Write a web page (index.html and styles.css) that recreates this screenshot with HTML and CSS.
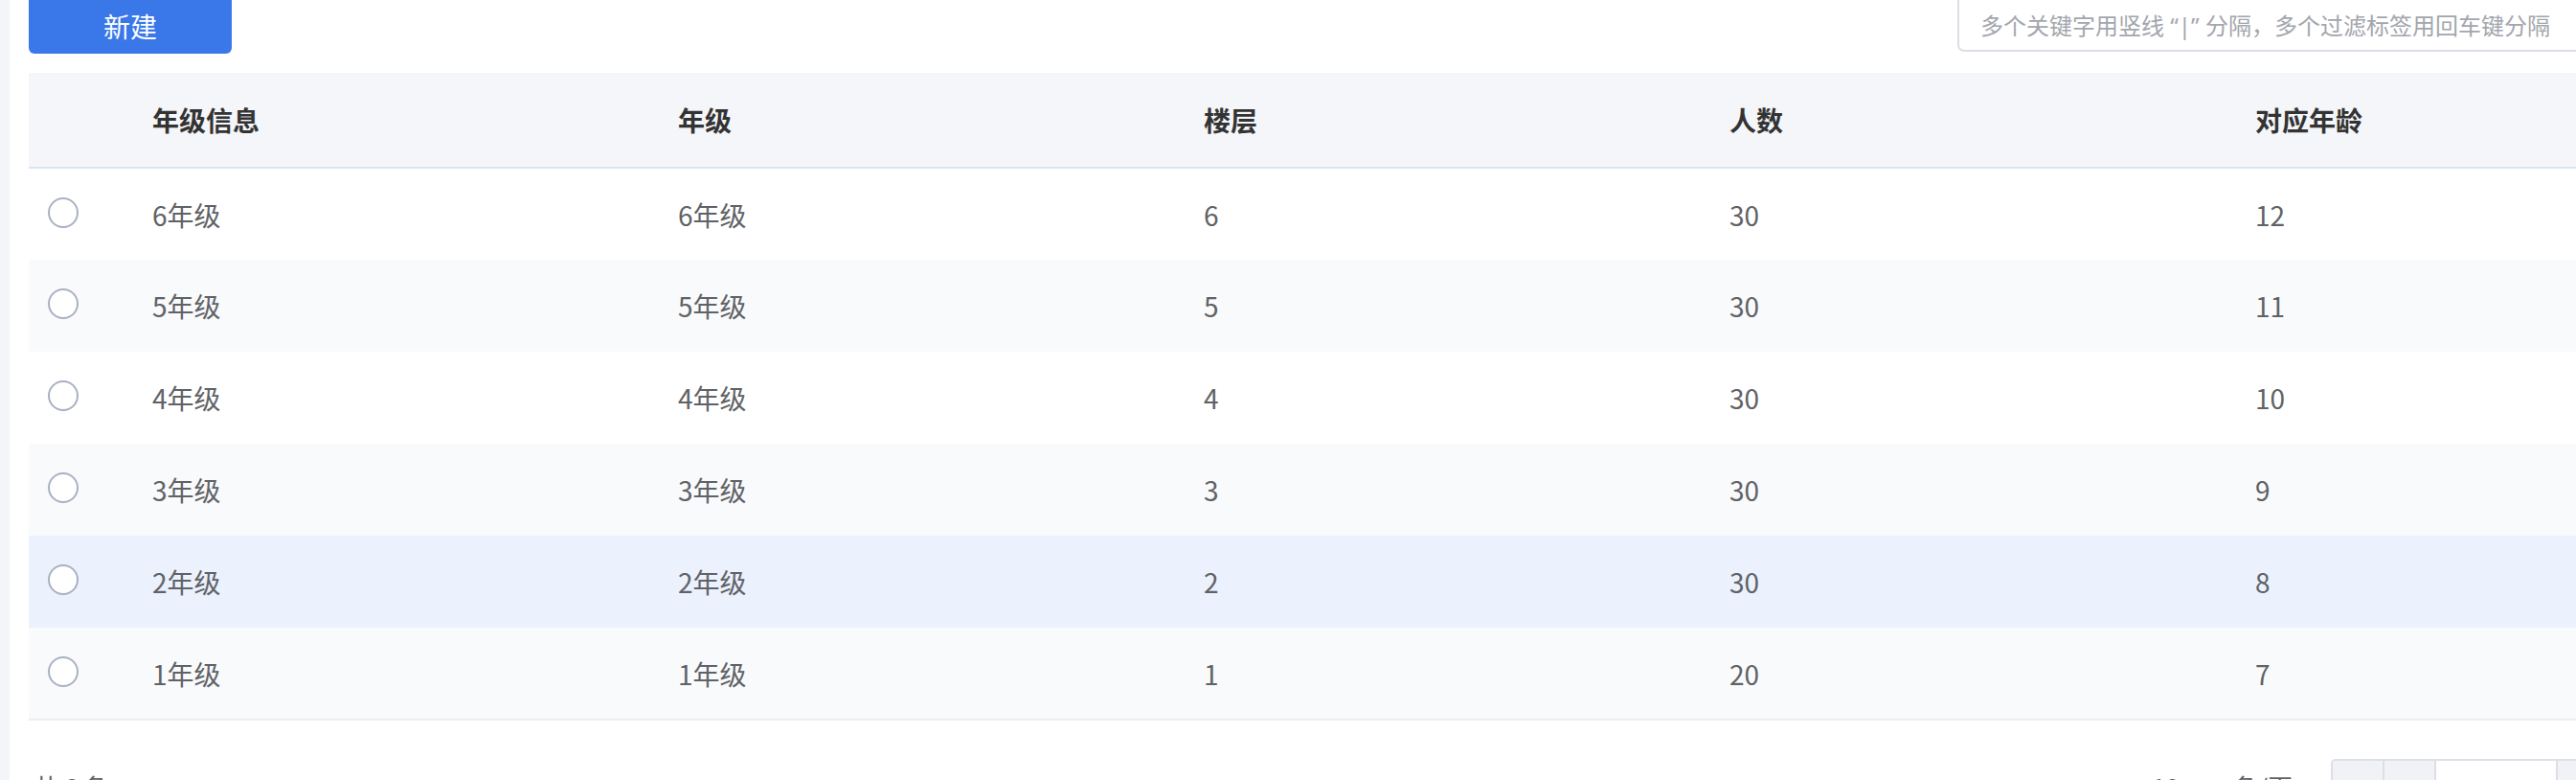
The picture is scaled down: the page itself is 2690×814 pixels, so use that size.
FILE: index.html
```html
<!DOCTYPE html>
<html lang="zh-CN">
<head>
    <meta charset="UTF-8">
    <title>年级管理</title>
    <link rel="stylesheet" href="styles.css">
</head>
<body>
    <div class="layout">
        <aside class="side"></aside>

        <main class="main">
            <div class="toolbar">
                <button class="btn-primary">新建</button>
                <div class="search">
                    <input class="search-input" type="text" placeholder="多个关键字用竖线 “|” 分隔，多个过滤标签用回车键分隔">
                </div>
            </div>

            <table class="grid">
                <colgroup>
                    <col class="col-check">
                    <col class="col-data">
                    <col class="col-data">
                    <col class="col-data">
                    <col class="col-data">
                    <col class="col-data">
                </colgroup>
                <thead>
                    <tr>
                        <th></th>
                        <th>年级信息</th>
                        <th>年级</th>
                        <th>楼层</th>
                        <th>人数</th>
                        <th>对应年龄</th>
                    </tr>
                </thead>
                <tbody>
                    <tr>
                        <td><span class="radio"></span></td>
                        <td>6年级</td><td>6年级</td><td>6</td><td>30</td><td>12</td>
                    </tr>
                    <tr>
                        <td><span class="radio"></span></td>
                        <td>5年级</td><td>5年级</td><td>5</td><td>30</td><td>11</td>
                    </tr>
                    <tr>
                        <td><span class="radio"></span></td>
                        <td>4年级</td><td>4年级</td><td>4</td><td>30</td><td>10</td>
                    </tr>
                    <tr>
                        <td><span class="radio"></span></td>
                        <td>3年级</td><td>3年级</td><td>3</td><td>30</td><td>9</td>
                    </tr>
                    <tr class="hover">
                        <td><span class="radio"></span></td>
                        <td>2年级</td><td>2年级</td><td>2</td><td>30</td><td>8</td>
                    </tr>
                    <tr>
                        <td><span class="radio"></span></td>
                        <td>1年级</td><td>1年级</td><td>1</td><td>20</td><td>7</td>
                    </tr>
                </tbody>
            </table>

            <div class="footer">
                <span class="total">共 6 条</span>
                <div class="pager">
                    <span class="sizes"><span>10</span><span>条/页</span></span>
                    <div class="pager-group">
                        <span class="pg pg-grey"></span>
                        <span class="pg pg-grey"></span>
                        <span class="pg pg-wide"></span>
                        <span class="pg pg-grey"></span>
                        <span class="pg pg-grey"></span>
                        <span class="pg pg-grey pg-last"></span>
                    </div>
                </div>
            </div>
        </main>
    </div>
</body>
</html>
```

FILE: styles.css
```css
* { margin: 0; padding: 0; box-sizing: border-box; }

body {
    font-family: "Noto Sans CJK SC", "Noto Sans", sans-serif;
    background: #fff;
    color: #606266;
    height: 100vh;
    overflow: hidden;
}

.layout {
    display: flex;
    height: 100%;
}

.side {
    width: 10px;
    flex-shrink: 0;
    background: #f4f5f9;
}

.main {
    flex-shrink: 0;
    width: 2865px;
    padding-left: 20px;
}

/* 顶部工具栏 */
.toolbar {
    display: flex;
    justify-content: space-between;
    align-items: flex-start;
    margin-top: -6px;
}

.btn-primary {
    width: 212px;
    height: 62px;
    border: none;
    border-radius: 6px;
    background: #3a77e8;
    color: #fff;
    font-family: inherit;
    font-size: 28px;
    padding-top: 4px;
}

.search {
    width: 831px;
}

.search-input {
    width: 100%;
    height: 60px;
    border: 2px solid #dcdfe6;
    border-radius: 7px;
    padding: 4px 22px 0;
    font-family: "Noto Sans", "Noto Sans CJK SC", sans-serif;
    font-size: 24px;
    color: #606266;
    outline: none;
}

.search-input::placeholder { color: #a3a6ad; }

/* 表格 */
.grid {
    margin-top: 20px;
    width: 2845px;
    table-layout: fixed;
    border-collapse: collapse;
    font-size: 28px;
}

.col-check { width: 100px; }
.col-data { width: 549px; }

.grid th, .grid td {
    text-align: left;
    padding-left: 29px;
    white-space: nowrap;
}

.grid th:first-child, .grid td:first-child { padding-left: 20px; }

.grid th {
    height: 99px;
    background: #f5f6f9;
    border-bottom: 2px solid #dbe4f6;
    color: #333;
    font-weight: 700;
}

.grid td {
    height: 96px;
    line-height: 1;
}

.grid tbody tr:nth-child(even) { background: #f9fafc; }
.grid tbody tr.hover { background: #ebf1fd; }
.grid tbody tr:last-child td { border-bottom: 2px solid #ebedf0; }

.radio {
    display: block;
    width: 32px;
    height: 32px;
    margin-top: -4px;
    border: 2px solid #a9b1c1;
    border-radius: 50%;
    background: #fff;
}

/* 分页 */
.footer {
    display: flex;
    justify-content: space-between;
    align-items: center;
    margin-top: 40px;
    height: 56px;
    padding-left: 5px;
    font-size: 26px;
}

.pager {
    display: flex;
    align-items: center;
}

.sizes {
    display: flex;
    gap: 56px;
    margin-right: 40px;
}

.pager-group {
    display: flex;
    height: 56px;
    border: 2px solid #dcdfe6;
    border-radius: 5px;
    overflow: hidden;
}

.pg {
    width: 54px;
    border-right: 2px solid #dcdfe6;
}

.pg-grey { background: #f0f2f5; }
.pg-wide { width: 127px; background: #fff; }
.pg-last { width: 94px; border-right: none; }
```
